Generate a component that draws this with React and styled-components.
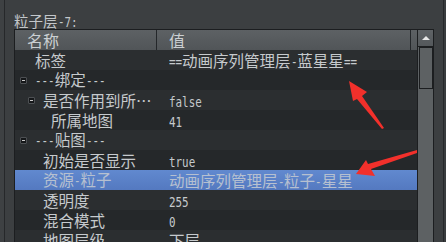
import React from "react";
import styled, { createGlobalStyle } from "styled-components";

const GlobalStyle = createGlobalStyle`
  html, body {
    margin: 0;
    padding: 0;
    background: #3c3f41;
    overflow: hidden;
  }
  body {
    font-family: "Noto Sans CJK SC", "Noto Sans", sans-serif;
  }
`;

const rows = [
  { name: "标签", value: "==动画序列管理层-蓝星星==", depth: 0, shade: "light" },
  { name: "---绑定---", value: "", depth: 0, group: true, shade: "dark" },
  { name: "是否作用到所…", value: "false", depth: 1, group: true, shade: "light" },
  { name: "所属地图", value: "41", depth: 2, shade: "dark" },
  { name: "---贴图---", value: "", depth: 0, group: true, shade: "light" },
  { name: "初始是否显示", value: "true", depth: 1, shade: "dark" },
  { name: "资源-粒子", value: "动画序列管理层-粒子-星星", depth: 1, selected: true },
  { name: "透明度", value: "255", depth: 1, shade: "light" },
  { name: "混合模式", value: "0", depth: 1, shade: "dark" },
  { name: "地图层级", value: "下层", depth: 1, shade: "light" },
  { name: "缩放", value: "1", depth: 1, shade: "dark" },
];

// ascii runs use a squeezed mono face (the tool's font has narrow latin glyphs)
const MONO_SIZE = 14.5;
const MONO_ADV = MONO_SIZE * 0.602;
const SQUEEZE = 0.75;

const Latin = styled.span`
  display: inline-block;
  font-family: "DejaVu Sans Mono", "Liberation Mono", monospace;
  font-size: ${MONO_SIZE}px;
  transform: scaleX(${SQUEEZE});
  transform-origin: 0 50%;
  margin-right: ${(p) => -p.$n * MONO_ADV * (1 - SQUEEZE)}px;
`;

function MixedText({ text }) {
  const parts = text.split(/([\x20-\x7e]+)/).filter(Boolean);
  return parts.map((p, i) =>
    /^[\x20-\x7e]+$/.test(p) ? (
      <Latin key={i} $n={p.length}>
        {p}
      </Latin>
    ) : (
      <span key={i}>{p}</span>
    )
  );
}

const Page = styled.div`
  display: flex;
  width: 446px;
  height: 242px;
  overflow: hidden;
  background: #3c3f41;
  position: relative;
`;

const Gutter = styled.div`
  width: 4px;
  flex: none;
  background: #3e4143;
  border-right: 1px solid #26282a;
`;

const RightStrip = styled.div`
  width: 2px;
  flex: none;
  background: #393c3e;
`;

const Panel = styled.div`
  flex: 1;
  min-width: 0;
  display: flex;
  flex-direction: column;
  padding: 13px 9px 0 9px;
  border-right: 1px solid #26282a;
`;

const Title = styled.div`
  height: 16px;
  line-height: 16px;
  font-size: 14.5px;
  color: #c3c7ca;
  white-space: nowrap;
`;

const Table = styled.div`
  flex: 1;
  display: grid;
  grid-template-columns: 1fr 17px;
  border-top: 1px solid #1c1e20;
  border-left: 1px solid #1c1e20;
`;

const Tree = styled.div`
  display: flex;
  flex-direction: column;
  background: #26292b;
`;

const Header = styled.div`
  display: grid;
  grid-template-columns: 142px 1fr 6px;
  height: 20px;
  background: linear-gradient(#5d6164, #515558);
`;

const HeadCell = styled.div`
  padding-left: ${(p) => p.$pad || 0}px;
  font-size: 16px;
  line-height: 20px;
  color: #cbcfd2;
  border-right: ${(p) => (p.$last ? "none" : "1px solid #24272a")};
`;

const Row = styled.div`
  display: grid;
  grid-template-columns: 142px 1fr;
  height: 20px;
  font-size: 15.5px;
  line-height: 20px;
  white-space: nowrap;
  color: ${(p) => (p.$selected ? "#b6c0d0" : "#c6cacd")};
  background: ${(p) =>
    p.$selected
      ? "linear-gradient(#6189cf, #5479c0)"
      : p.$shade === "light"
      ? "#2b2e30"
      : "#25282a"};
`;

const NameCell = styled.div`
  display: flex;
  align-items: center;
  padding-left: ${(p) => 5 + p.$depth * 8}px;
  overflow: hidden;
`;

const Toggle = styled.span`
  width: 7px;
  height: 7px;
  flex: none;
  box-sizing: border-box;
  margin-right: 8px;
  border: 1px solid #4d5053;
  background: #16181a;
  border-radius: 1px;
  display: flex;
  align-items: center;
  justify-content: center;
  &::after {
    content: "";
    width: 3px;
    height: 1px;
    background: #c8c8c8;
  }
`;

const Spacer = styled.span`
  width: 15px;
  flex: none;
`;

const Label = styled.span`
  display: inline-block;
`;

const ValueCell = styled.div`
  padding-left: 12px;
  overflow: hidden;
`;

const Scrollbar = styled.div`
  display: flex;
  flex-direction: column;
  background: #5d6163;
  border-left: 1px solid #1c1e20;
  border-right: 1px solid #1c1e20;
`;

const UpButton = styled.div`
  height: 16px;
  flex: none;
  background: linear-gradient(#5f6366, #54585b);
  border-bottom: 1px solid #1c1e20;
  display: flex;
  align-items: center;
  justify-content: center;
  &::after {
    content: "";
    border-left: 4px solid transparent;
    border-right: 4px solid transparent;
    border-bottom: 4px solid #e8e8e8;
  }
`;

const Thumb = styled.div`
  height: 40px;
  margin: 0 0 0 1px;
  border: 1px solid #1c1e20;
  background: #5d6163;
`;

const Overlay = styled.svg`
  position: absolute;
  left: 0;
  top: 0;
  pointer-events: none;
`;

export default function App() {
  return (
    <>
      <GlobalStyle />
      <Page>
        <Gutter />
        <Panel>
          <Title>
            <MixedText text="粒子层-7:" />
          </Title>
          <Table>
            <Tree>
              <Header>
                <HeadCell $pad={12}>名称</HeadCell>
                <HeadCell $pad={12}>值</HeadCell>
                <HeadCell $last />
              </Header>
              {rows.map((r, i) => (
                <Row key={i} $selected={r.selected} $shade={r.shade}>
                  <NameCell $depth={r.depth}>
                    {r.group ? <Toggle /> : <Spacer />}
                    <Label>
                      <MixedText text={r.name} />
                    </Label>
                  </NameCell>
                  <ValueCell>
                    <MixedText text={r.value} />
                  </ValueCell>
                </Row>
              ))}
            </Tree>
            <Scrollbar>
              <UpButton />
              <Thumb />
            </Scrollbar>
          </Table>
        </Panel>
        <RightStrip />
        <Overlay width="446" height="242" viewBox="0 0 446 242">
          <polygon
            fill="#f2302b"
            points="349,81 367,92 362,96 384,128 382,129 357,99 353,101"
          />
          <polygon
            fill="#f2302b"
            points="356,174 366,160 368,164 417,150 417,153 371,169 375,176"
          />
        </Overlay>
      </Page>
    </>
  );
}
